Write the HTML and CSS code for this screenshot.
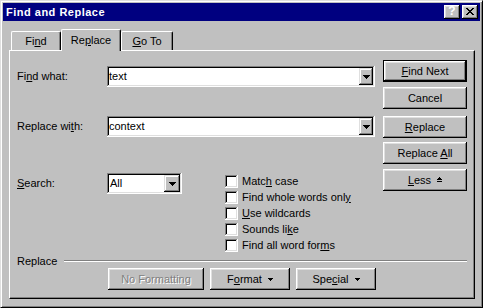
FILE: index.html
```html
<!DOCTYPE html>
<html lang="en">
<head>
    <meta charset="UTF-8">
    <title>Find and Replace</title>
    <link rel="stylesheet" href="styles.css">
</head>
<body>
    <div class="window">
        <div class="titlebar">
            <span class="title">Find and Replace</span>
            <div class="title-buttons">
                <button class="tbtn help">?</button>
                <button class="tbtn">
                    <svg width="8" height="7" viewBox="0 0 8 7" shape-rendering="crispEdges">
                        <path d="M0 0h2v1h-2z M6 0h2v1h-2z M1 1h2v1h-2z M5 1h2v1h-2z M2 2h4v1h-4z M3 3h2v1h-2z M2 4h4v1h-4z M1 5h2v1h-2z M5 5h2v1h-2z M0 6h2v1h-2z M6 6h2v1h-2z" fill="#000"/>
                    </svg>
                </button>
            </div>
        </div>

        <div class="content">
            <div class="tabs">
                <div class="tab tab-find">Fi<u>n</u>d</div>
                <div class="tab tab-replace active">Re<u>p</u>lace</div>
                <div class="tab tab-goto"><u>G</u>o To</div>
            </div>

            <div class="panel">
                <div class="main">
                    <div class="fields">
                        <div class="row">
                            <label class="label">Fi<u>n</u>d what:</label>
                            <div class="combo combo-wide">
                                <span class="value">text</span>
                                <span class="drop drop-narrow"><svg width="7" height="4" viewBox="0 0 7 4" shape-rendering="crispEdges"><path d="M0 0h7v1h-1v1h-1v1h-1v1h-1v-1h-1v-1h-1v-1h-1z" fill="#000"/></svg></span>
                            </div>
                        </div>
                        <div class="row row-replace">
                            <label class="label">Replace wi<u>t</u>h:</label>
                            <div class="combo combo-wide">
                                <span class="value">context</span>
                                <span class="drop drop-narrow"><svg width="7" height="4" viewBox="0 0 7 4" shape-rendering="crispEdges"><path d="M0 0h7v1h-1v1h-1v1h-1v1h-1v-1h-1v-1h-1v-1h-1z" fill="#000"/></svg></span>
                            </div>
                        </div>
                        <div class="row row-search">
                            <label class="label"><u>S</u>earch:</label>
                            <div class="combo combo-select">
                                <span class="value value-select">All</span>
                                <span class="drop"><svg width="7" height="4" viewBox="0 0 7 4" shape-rendering="crispEdges"><path d="M0 0h7v1h-1v1h-1v1h-1v1h-1v-1h-1v-1h-1v-1h-1z" fill="#000"/></svg></span>
                            </div>
                            <div class="options">
                                <div class="check"><span class="box"></span><span>Matc<u>h</u> case</span></div>
                                <div class="check"><span class="box"></span><span>Find whole words onl<u>y</u></span></div>
                                <div class="check"><span class="box"></span><span><u>U</u>se wildcards</span></div>
                                <div class="check"><span class="box"></span><span>Sounds li<u>k</u>e</span></div>
                                <div class="check"><span class="box"></span><span>Find all word for<u>m</u>s</span></div>
                            </div>
                        </div>
                    </div>

                    <div class="actions">
                        <button class="btn default"><span><u>F</u>ind Next</span></button>
                        <button class="btn btn-cancel"><span>Cancel</span></button>
                        <button class="btn btn-replace"><span><u>R</u>eplace</span></button>
                        <button class="btn btn-all"><span>Replace <u>A</u>ll</span></button>
                        <button class="btn btn-less"><span><u>L</u>ess</span>
                            <svg class="less-icon" width="5" height="5" viewBox="0 0 5 5" shape-rendering="crispEdges"><path d="M2 0h1v1h-1z M1 1h3v1h-3z M0 2h5v1h-5z M0 4h5v1h-5z" fill="#000"/></svg>
                        </button>
                    </div>
                </div>

                <div class="group-head">
                    <span>Replace</span>
                    <span class="etch"></span>
                </div>

                <div class="bottom-buttons">
                    <button class="btn disabled btn-noformat"><span>No Formatting</span></button>
                    <button class="btn btn-menu"><span>F<u>o</u>rmat</span>
                        <svg width="5" height="3" viewBox="0 0 5 3" shape-rendering="crispEdges"><path d="M0 0h5v1h-1v1h-1v1h-1v-1h-1v-1h-1z" fill="#000"/></svg>
                    </button>
                    <button class="btn btn-menu"><span>Spe<u>c</u>ial</span>
                        <svg width="5" height="3" viewBox="0 0 5 3" shape-rendering="crispEdges"><path d="M0 0h5v1h-1v1h-1v1h-1v-1h-1v-1h-1z" fill="#000"/></svg>
                    </button>
                </div>
            </div>
        </div>
    </div>
</body>
</html>
```

FILE: styles.css
```css
* {
    box-sizing: border-box;
}
body {
    margin: 0;
    font-family: "Liberation Sans", Arial, sans-serif;
    font-size: 11px;
    line-height: 13px;
    color: #000;
    background: #c0c0c0;
}
u {
    text-underline-offset: 1px;
}
button {
    font: inherit;
    color: inherit;
    margin: 0;
    padding: 0;
    border: none;
    background: #c0c0c0;
}

.window {
    width: 483px;
    height: 308px;
    display: flex;
    flex-direction: column;
    padding: 2px;
    background: #c0c0c0;
    border: 1px solid;
    border-color: #dfdfdf #000 #000 #dfdfdf;
    box-shadow: inset 1px 1px #fff, inset -1px -1px #808080;
}

/* title bar */
.titlebar {
    height: 18px;
    display: flex;
    align-items: center;
    padding: 0 2px 0 3px;
    background: #000080;
    color: #fff;
}
.title {
    font-weight: bold;
    letter-spacing: 0.5px;
}
.title-buttons {
    margin-left: auto;
    display: flex;
    gap: 2px;
}
.tbtn {
    width: 16px;
    height: 14px;
    display: flex;
    align-items: center;
    justify-content: center;
    box-shadow: inset -1px -1px #000, inset 1px 1px #fff, inset -2px -2px #808080, inset 2px 2px #dfdfdf;
}
.tbtn svg {
    margin-top: -1px;
}
.help {
    font-weight: bold;
    font-size: 12px;
    padding-bottom: 1px;
}

/* tabs */
.content {
    flex: 1;
    display: flex;
    flex-direction: column;
    padding: 8px 5px 6px 6px;
}
.tabs {
    display: flex;
    align-items: flex-end;
    padding-left: 2px;
}
.tab {
    height: 19px;
    padding-top: 3px;
    text-align: center;
    border-top: 1px solid #fff;
    border-left: 1px solid #fff;
    border-right: 1px solid #000;
    border-radius: 2px 2px 0 0;
    box-shadow: inset -1px 0 #808080;
}
.tab-find {
    width: 50px;
}
.tab-replace {
    width: 60px;
}
.tab-goto {
    width: 52px;
}
.tab.active {
    height: 22px;
    margin-bottom: -1px;
    padding-top: 4px;
    position: relative;
    z-index: 1;
    background: #c0c0c0;
}

.panel {
    flex: 1;
    display: flex;
    flex-direction: column;
    border: 1px solid;
    border-color: #fff #000 #000 #fff;
    box-shadow: inset -1px -1px #808080;
}

/* fields */
.main {
    display: flex;
    padding-left: 7px;
}
.fields {
    width: 358px;
    padding-top: 15px;
}
.row {
    display: flex;
    align-items: flex-start;
}
.row-replace {
    margin-top: 29px;
}
.row-search {
    margin-top: 36px;
}
.label {
    width: 90px;
    padding-top: 4px;
}
.combo {
    height: 21px;
    display: flex;
    padding: 2px;
    background: #fff;
    box-shadow: inset -1px -1px #fff, inset 1px 1px #808080, inset -2px -2px #dfdfdf, inset 2px 2px #000;
}
.combo-wide {
    width: 268px;
}
.combo-select {
    width: 75px;
}
.value {
    flex: 1;
    padding: 2px 0 0 0;
}
.value-select {
    padding-left: 1px;
}
.drop {
    width: 16px;
    height: 17px;
    display: flex;
    align-items: center;
    justify-content: center;
    background: #c0c0c0;
    box-shadow: inset -1px -1px #000, inset 1px 1px #dfdfdf, inset -2px -2px #808080, inset 2px 2px #fff;
}
.drop-narrow {
    width: 14px;
}

.options {
    margin: 2px 0 0 43px;
}
.check {
    height: 16px;
    display: flex;
    align-items: flex-start;
    gap: 4px;
}
.box {
    width: 13px;
    height: 13px;
    background: #fff;
    box-shadow: inset -1px -1px #fff, inset 1px 1px #808080, inset -2px -2px #dfdfdf, inset 2px 2px #000;
}

/* buttons */
.actions {
    width: 84px;
    margin-left: 8px;
    padding-top: 9px;
    display: flex;
    flex-direction: column;
}
.btn {
    height: 22px;
    display: flex;
    align-items: center;
    justify-content: center;
    gap: 6px;
    box-shadow: inset -1px -1px #000, inset 1px 1px #fff, inset -2px -2px #808080, inset 2px 2px #dfdfdf;
}
.btn.default {
    border: 1px solid #000;
}
.btn-cancel {
    margin-top: 5px;
}
.btn-replace {
    margin-top: 7px;
}
.btn-all {
    margin-top: 4px;
}
.btn-less {
    margin-top: 5px;
}
.less-icon {
    margin-bottom: 2px;
}

.group-head {
    display: flex;
    padding-left: 7px;
    margin-right: 7px;
}
.etch {
    flex: 1;
    height: 2px;
    margin: 5px 0 0 7px;
    border-top: 1px solid #808080;
    border-bottom: 1px solid #fff;
}

.bottom-buttons {
    display: flex;
    gap: 6px;
    padding-left: 98px;
}
.btn-noformat {
    width: 96px;
}
.btn-menu {
    width: 80px;
}
.btn.disabled {
    color: #808080;
    text-shadow: 1px 1px #fff;
}
```
